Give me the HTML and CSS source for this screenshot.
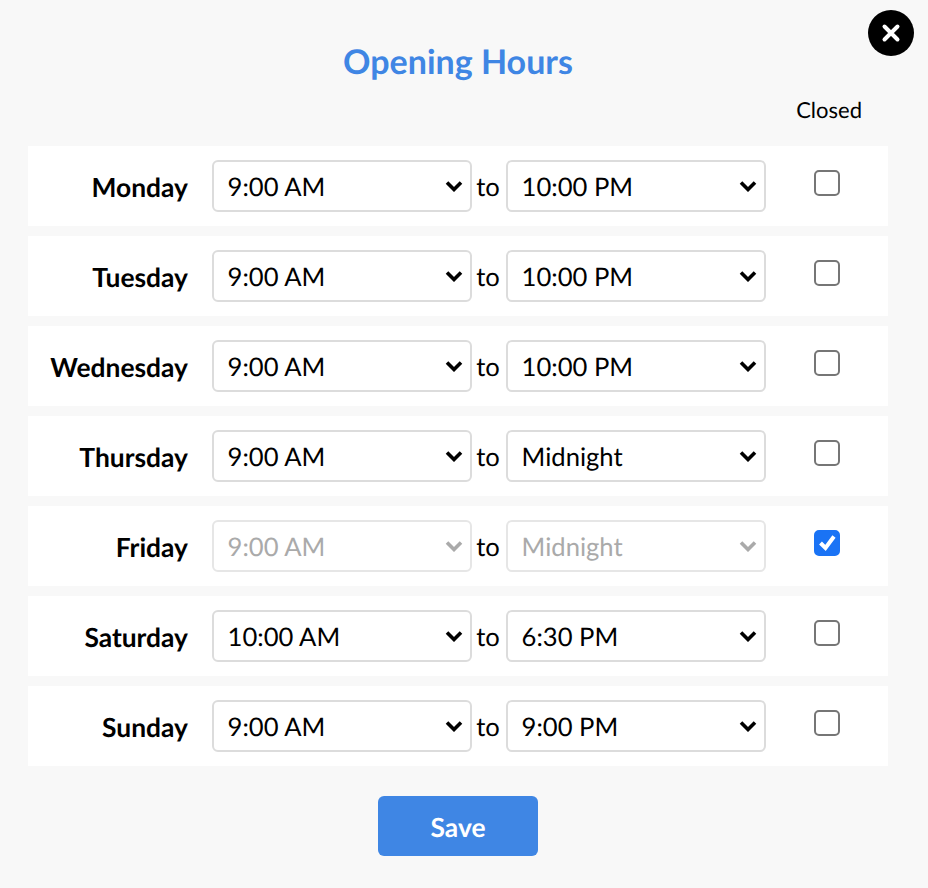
FILE: index.html
```html
<!DOCTYPE html>
<html lang="en">
<head>
<meta charset="utf-8">
<title>Opening Hours</title>
<link rel="stylesheet" href="styles.css">
</head>
<body>
<main class="dialog">
  <button class="close" type="button" aria-label="Close">
    <svg width="22" height="22" viewBox="0 0 22 22"><path d="M4.5 4.5 17.5 17.5M17.5 4.5 4.5 17.5" stroke="#fff" stroke-width="4" stroke-linecap="round" fill="none"/></svg>
  </button>
  <h1 class="title">Opening Hours</h1>
  <div class="closed-head"><span>Closed</span></div>
  <div class="rows">
    <div class="row">
      <span class="day">Monday</span>
      <div class="field"><select class="time"><option>9:00 AM</option></select><svg class="chev" viewBox="0 0 18 12"><path d="M2 2.5 9 9.5 16 2.5" /></svg></div>
      <span class="to">to</span>
      <div class="field"><select class="time"><option>10:00 PM</option></select><svg class="chev" viewBox="0 0 18 12"><path d="M2 2.5 9 9.5 16 2.5" /></svg></div>
      <span class="check"><input class="box" type="checkbox"><svg class="tick" viewBox="0 0 26 26"><path d="M6.5 13 11.5 18 20 6.5" /></svg></span>
    </div>
    <div class="row">
      <span class="day">Tuesday</span>
      <div class="field"><select class="time"><option>9:00 AM</option></select><svg class="chev" viewBox="0 0 18 12"><path d="M2 2.5 9 9.5 16 2.5" /></svg></div>
      <span class="to">to</span>
      <div class="field"><select class="time"><option>10:00 PM</option></select><svg class="chev" viewBox="0 0 18 12"><path d="M2 2.5 9 9.5 16 2.5" /></svg></div>
      <span class="check"><input class="box" type="checkbox"><svg class="tick" viewBox="0 0 26 26"><path d="M6.5 13 11.5 18 20 6.5" /></svg></span>
    </div>
    <div class="row">
      <span class="day">Wednesday</span>
      <div class="field"><select class="time"><option>9:00 AM</option></select><svg class="chev" viewBox="0 0 18 12"><path d="M2 2.5 9 9.5 16 2.5" /></svg></div>
      <span class="to">to</span>
      <div class="field"><select class="time"><option>10:00 PM</option></select><svg class="chev" viewBox="0 0 18 12"><path d="M2 2.5 9 9.5 16 2.5" /></svg></div>
      <span class="check"><input class="box" type="checkbox"><svg class="tick" viewBox="0 0 26 26"><path d="M6.5 13 11.5 18 20 6.5" /></svg></span>
    </div>
    <div class="row">
      <span class="day">Thursday</span>
      <div class="field"><select class="time"><option>9:00 AM</option></select><svg class="chev" viewBox="0 0 18 12"><path d="M2 2.5 9 9.5 16 2.5" /></svg></div>
      <span class="to">to</span>
      <div class="field"><select class="time"><option>Midnight</option></select><svg class="chev" viewBox="0 0 18 12"><path d="M2 2.5 9 9.5 16 2.5" /></svg></div>
      <span class="check"><input class="box" type="checkbox"><svg class="tick" viewBox="0 0 26 26"><path d="M6.5 13 11.5 18 20 6.5" /></svg></span>
    </div>
    <div class="row">
      <span class="day">Friday</span>
      <div class="field is-disabled"><select class="time" disabled><option>9:00 AM</option></select><svg class="chev" viewBox="0 0 18 12"><path d="M2 2.5 9 9.5 16 2.5" /></svg></div>
      <span class="to">to</span>
      <div class="field is-disabled"><select class="time" disabled><option>Midnight</option></select><svg class="chev" viewBox="0 0 18 12"><path d="M2 2.5 9 9.5 16 2.5" /></svg></div>
      <span class="check"><input class="box" type="checkbox" checked><svg class="tick" viewBox="0 0 26 26"><path d="M6.5 13 11.5 18 20 6.5" /></svg></span>
    </div>
    <div class="row">
      <span class="day">Saturday</span>
      <div class="field"><select class="time"><option>10:00 AM</option></select><svg class="chev" viewBox="0 0 18 12"><path d="M2 2.5 9 9.5 16 2.5" /></svg></div>
      <span class="to">to</span>
      <div class="field"><select class="time"><option>6:30 PM</option></select><svg class="chev" viewBox="0 0 18 12"><path d="M2 2.5 9 9.5 16 2.5" /></svg></div>
      <span class="check"><input class="box" type="checkbox"><svg class="tick" viewBox="0 0 26 26"><path d="M6.5 13 11.5 18 20 6.5" /></svg></span>
    </div>
    <div class="row">
      <span class="day">Sunday</span>
      <div class="field"><select class="time"><option>9:00 AM</option></select><svg class="chev" viewBox="0 0 18 12"><path d="M2 2.5 9 9.5 16 2.5" /></svg></div>
      <span class="to">to</span>
      <div class="field"><select class="time"><option>9:00 PM</option></select><svg class="chev" viewBox="0 0 18 12"><path d="M2 2.5 9 9.5 16 2.5" /></svg></div>
      <span class="check"><input class="box" type="checkbox"><svg class="tick" viewBox="0 0 26 26"><path d="M6.5 13 11.5 18 20 6.5" /></svg></span>
    </div>
  </div>
  <div class="actions"><button class="save" type="button">Save</button></div>
</main>
</body>
</html>
```

FILE: styles.css
```css
* { box-sizing: border-box; }
html, body { margin: 0; height: 100%; }
body {
  background: #f8f8f8;
  color: #000;
  font-family: Lato, "Liberation Sans", sans-serif;
  text-rendering: geometricPrecision;
  overflow: hidden;
}
.dialog {
  position: relative;
  height: 888px;
  padding: 40px 40px 0 28px;
}
.close {
  position: absolute;
  top: 10px;
  right: 14px;
  width: 46px;
  height: 46px;
  padding: 0;
  border: 0;
  border-radius: 50%;
  background: #000;
  display: flex;
  align-items: center;
  justify-content: center;
}
.title {
  margin: 0;
  height: 44px;
  line-height: 44px;
  text-align: center;
  font-size: 34px;
  font-weight: 700;
  color: #3f86e4;
}
.closed-head {
  display: flex;
  justify-content: flex-end;
  padding-right: 26px;
  margin-top: 14px;
  height: 48px;
  font-size: 22px;
  line-height: 24px;
}
.rows {
  display: flex;
  flex-direction: column;
  gap: 10px;
}
.row {
  display: flex;
  align-items: center;
  height: 80px;
  background: #fff;
}
.day {
  width: 160px;
  padding-top: 1px;
  text-align: right;
  font-size: 26.4px;
  font-weight: 700;
  margin-right: 24px;
}
.field {
  position: relative;
  width: 260px;
  height: 52px;
}
.time {
  appearance: none;
  width: 100%;
  height: 100%;
  padding: 1px 40px 0 13.6px;
  border: 2px solid #dcdcdc;
  border-radius: 6px;
  background: #fff;
  color: #000;
  font-family: inherit;
  font-size: 25.6px;
  text-rendering: geometricPrecision;
}
.time:disabled {
  border-color: #e6e6e6;
  color: #aaa;
  opacity: 1;
}
.chev {
  position: absolute;
  top: 20px;
  right: 9px;
  width: 18px;
  height: 12px;
  pointer-events: none;
}
.chev path {
  fill: none;
  stroke: #000;
  stroke-width: 3.6;
}
.is-disabled .chev path { stroke: #aaa; }
.to {
  width: 34px;
  padding: 1px 2px 0 0;
  text-align: center;
  font-size: 25.6px;
}
.check {
  position: relative;
  width: 26px;
  height: 26px;
  margin-left: 48px;
  margin-top: -6px;
}
.box {
  appearance: none;
  display: block;
  margin: 0;
  width: 26px;
  height: 26px;
  border: 2px solid #767676;
  border-radius: 5px;
  background: #fff;
}
.box:checked {
  border-color: #1a73f5;
  background: #1a73f5;
}
.tick {
  position: absolute;
  inset: 0;
  width: 26px;
  height: 26px;
  display: none;
  pointer-events: none;
}
.box:checked + .tick { display: block; }
.tick path {
  fill: none;
  stroke: #fff;
  stroke-width: 4;
}
.actions {
  display: flex;
  justify-content: center;
  margin-top: 30px;
}
.save {
  width: 160px;
  height: 60px;
  padding: 1px 0 0;
  border: 0;
  border-radius: 6px;
  background: #3f86e4;
  color: #fff;
  font-family: inherit;
  font-size: 26.4px;
  font-weight: 700;
  text-rendering: geometricPrecision;
}
```
